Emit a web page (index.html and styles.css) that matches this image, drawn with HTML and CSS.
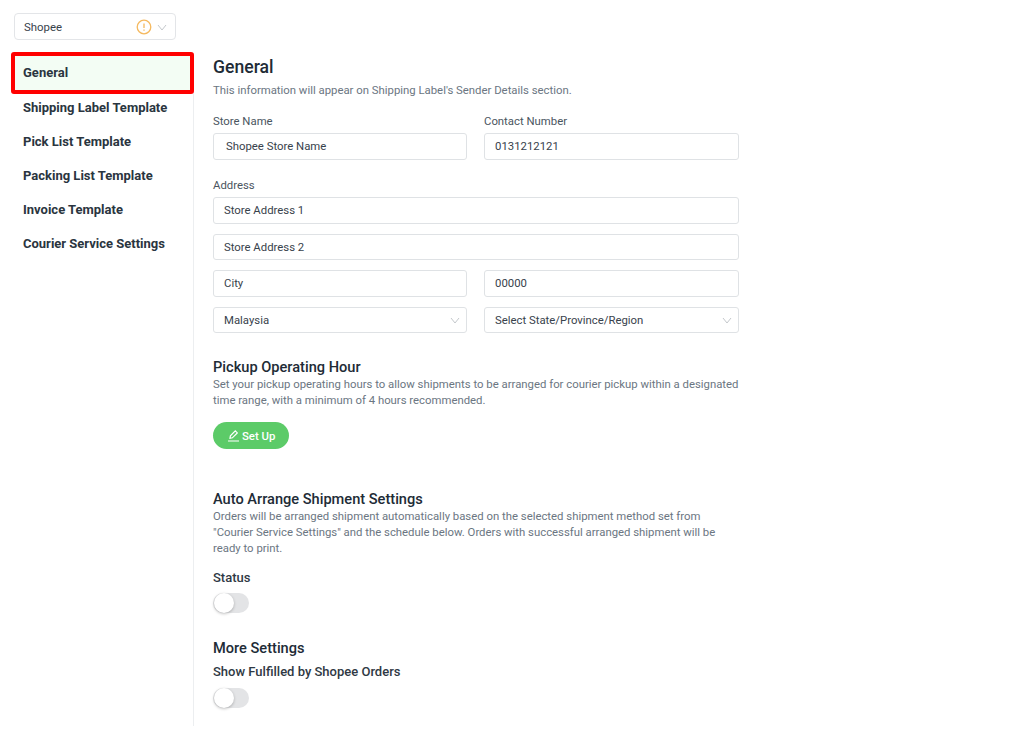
FILE: index.html
```html
<!DOCTYPE html>
<html lang="en">
<head>
<meta charset="utf-8">
<title>General</title>
<link rel="stylesheet" href="styles.css">
</head>
<body>
<div class="page">
  <div class="store-select">
    <span class="store-name">Shopee</span>
    <svg class="warn" width="16" height="16" viewBox="0 0 16 16"><circle cx="8" cy="8" r="6.8" fill="none" stroke="#f5b95f" stroke-width="1.3"/><path d="M8 4.4v4.6M8 10.6v1.2" fill="none" stroke="#f5b95f" stroke-width="1.3"/></svg>
    <svg class="chev" width="12" height="12" viewBox="0 0 12 12"><path d="M2 4l4 5 4-5" fill="none" stroke="#c4c8cc" stroke-width="1"/></svg>
  </div>
  <div class="columns">
    <nav class="side">
      <a class="nav-item active">General</a>
      <a class="nav-item">Shipping Label Template</a>
      <a class="nav-item">Pick List Template</a>
      <a class="nav-item">Packing List Template</a>
      <a class="nav-item">Invoice Template</a>
      <a class="nav-item">Courier Service Settings</a>
    </nav>
    <main class="content">
      <h1 class="title">General</h1>
      <p class="desc">This information will appear on Shipping Label's Sender Details section.</p>
      <div class="grid two top">
        <div><div class="label">Store Name</div><div class="input wide-pad">Shopee Store Name</div></div>
        <div><div class="label">Contact Number</div><div class="input">0131212121</div></div>
      </div>
      <div class="label addr">Address</div>
      <div class="stack">
        <div class="input">Store Address 1</div>
        <div class="input">Store Address 2</div>
        <div class="grid two">
          <div class="input">City</div>
          <div class="input">00000</div>
        </div>
        <div class="grid two">
          <div class="input select">Malaysia<svg width="12" height="12" viewBox="0 0 12 12"><path d="M2 4l4 5 4-5" fill="none" stroke="#c4c8cc" stroke-width="1"/></svg></div>
          <div class="input select">Select State/Province/Region<svg width="12" height="12" viewBox="0 0 12 12"><path d="M2 4l4 5 4-5" fill="none" stroke="#c4c8cc" stroke-width="1"/></svg></div>
        </div>
      </div>
      <h2 class="head pickup">Pickup Operating Hour</h2>
      <p class="desc">Set your pickup operating hours to allow shipments to be arranged for courier pickup within a designated time range, with a minimum of 4 hours recommended.</p>
      <button class="btn"><svg width="13" height="13" viewBox="0 0 13 13"><path d="M3 9.2l.4-2.4L8.3 1.9l2 2-4.9 4.9zM1 12h11" fill="none" stroke="#fff" stroke-width="1.2"/></svg>Set Up</button>
      <h2 class="head auto">Auto Arrange Shipment Settings</h2>
      <p class="desc">Orders will be arranged shipment automatically based on the selected shipment method set from "Courier Service Settings" and the schedule below. Orders with successful arranged shipment will be ready to print.</p>
      <div class="field-title status">Status</div>
      <div class="toggle"><span class="knob"></span></div>
      <h2 class="head more">More Settings</h2>
      <div class="field-title fulfilled">Show Fulfilled by Shopee Orders</div>
      <div class="toggle last"><span class="knob"></span></div>
    </main>
  </div>
</div>
</body>
</html>
```
FILE: styles.css
```css
* { box-sizing: border-box; }
html, body { margin: 0; padding: 0; background: #fff; }
body { font-family: Roboto, "Liberation Sans", sans-serif; color: #212b36; height: 739px; overflow: hidden; }
.page { padding: 13px 0 0 14px; }
.store-select { width: 162px; height: 27px; border: 1px solid #e3e5e8; border-radius: 4px; display: flex; align-items: center; padding: 0 7px 0 9px; font-size: 11.4px; color: #38424c; }
.store-name { flex: 1; }
.warn { margin-right: 4px; }
.columns { display: flex; margin-top: 13px; margin-left: -3px; }
.side { width: 183px; flex: none; border-right: 1px solid #eceef0; height: 673px; position: relative; padding-top: 2px; }
.nav-item { display: block; height: 34px; line-height: 33px; padding-left: 12px; font-size: 13px; font-weight: 700; color: #2a3540; }
.nav-item.active { height: 42px; line-height: 34px; margin: -3px 0 -3px; width: 183px; padding-left: 8px; background: #f3fdf4; border: 4px solid #f00; border-radius: 3px; }
.content { padding: 0 0 0 19px; width: 545px; flex: none; }
.title { margin: 3px 0 0; font-size: 17.6px; line-height: 22px; font-weight: 500; }
.desc { margin: 0; font-size: 11.35px; line-height: 16px; color: #6b7682; }
.title + .desc { margin-top: 4px; }
.grid.two { display: grid; grid-template-columns: 254px 255px; gap: 17px; }
.top { margin-top: 16px; }
.label { font-size: 11.35px; line-height: 14px; color: #4a5560; margin-bottom: 5px; }
.addr { margin-top: 18.4px; margin-bottom: 5px; }
.stack { display: flex; flex-direction: column; gap: 10px; }
.input { height: 26.6px; border: 1px solid #dfe2e5; border-radius: 3px; font-size: 11.35px; line-height: 25px; padding-left: 10px; color: #38424c; }
.wide-pad { padding-left: 12px; }
.select { display: flex; justify-content: space-between; align-items: center; padding-right: 5px; }
.head { margin: 0; font-size: 14.6px; line-height: 18px; font-weight: 500; }
.pickup { margin-top: 25px; }
.btn { display: flex; align-items: center; gap: 2px; margin-top: 14px; width: 76px; height: 27px; border: 0; border-radius: 14px; background: #5ccb68; color: #fff; font: 500 11.35px Roboto, "Liberation Sans", sans-serif; padding: 0 0 0 14px; }
.auto { margin-top: 41px; }
.field-title { font-size: 13px; font-weight: 500; line-height: 15px; color: #2f3944; }
.status { margin-top: 14px; }
.toggle { width: 36px; height: 20px; border-radius: 10px; background: #e3e4e6; margin-top: 8px; position: relative; }
.toggle.last { margin-top: 9px; }
.knob { position: absolute; left: 1px; top: 0; width: 20px; height: 20px; border-radius: 50%; background: #fff; box-shadow: 0 1px 3px rgba(0,0,0,.25); }
.more { margin-top: 26px; }
.fulfilled { margin-top: 7px; }
```
